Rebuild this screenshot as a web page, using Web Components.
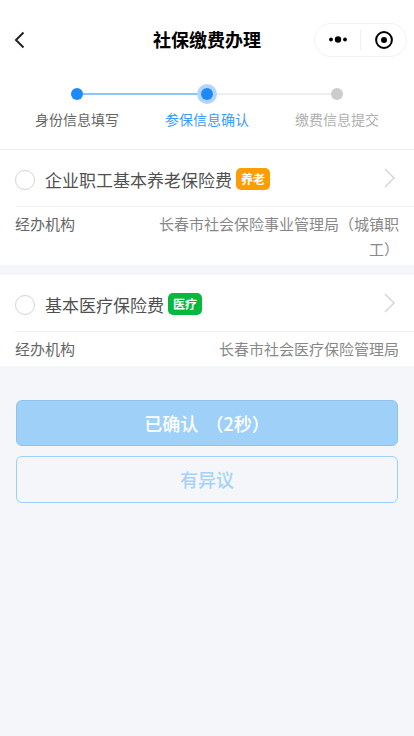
<!DOCTYPE html>
<html lang="zh-CN">
<head>
<meta charset="utf-8">
<title>社保缴费办理</title>
<style>
    html, body {
        margin: 0;
        height: 100%;
        background: #f4f6fa;
        font-family: "Noto Sans CJK SC", "Noto Sans", sans-serif;
    }
</style>
</head>
<body>
<app-page>
    <nav-bar title="社保缴费办理"></nav-bar>
    <step-bar active="1"></step-bar>
    <insurance-card name="企业职工基本养老保险费" tag="养老" tag-color="#ff9d00" value="长春市社会保险事业管理局（城镇职工）"></insurance-card>
    <insurance-card name="基本医疗保险费" tag="医疗" tag-color="#07b83f" value="长春市社会医疗保险管理局"></insurance-card>
    <action-bar>
        <action-button kind="primary">已确认 （2秒）</action-button>
        <action-button kind="plain">有异议</action-button>
    </action-bar>
</app-page>
<script>
class AppPage extends HTMLElement {
    constructor() {
        super();
        this.attachShadow({ mode: "open" });
    }

    connectedCallback() {
        this.shadowRoot.innerHTML = `
        <style>
            :host {
                display: block;
                min-height: 736px;
                background: #f4f6fa;
            }
        </style>
        <slot></slot>
        `;
    }
}

class NavBar extends HTMLElement {
    constructor() {
        super();
        this.attachShadow({ mode: "open" });
    }

    connectedCallback() {
        this.shadowRoot.innerHTML = `
        <style>
            :host {
                display: block;
                background: #fff;
                padding-top: 23px;
                height: 34px;
            }
            .bar {
                display: grid;
                grid-template-columns: 1fr auto 1fr;
                align-items: center;
                height: 34px;
            }
            .back {
                display: block;
                margin-left: 12px;
            }
            h1 {
                margin: 0 0 2px;
                font-size: 18px;
                line-height: 26px;
                font-weight: 700;
                color: #000;
            }
            .capsule {
                justify-self: end;
                margin-right: 7px;
                box-sizing: border-box;
                width: 93px;
                height: 34px;
                border: 1px solid #f2f2f2;
                border-radius: 17px;
                display: flex;
                align-items: center;
            }
            .capsule svg { display: block; }
            .cell {
                flex: 1;
                display: flex;
                justify-content: center;
            }
            .sep {
                width: 1px;
                height: 20px;
                background: #eee;
            }
        </style>
        <div class="bar">
            <svg class="back" width="14" height="20" viewBox="0 0 14 20">
                <path d="M11.5 2.5 L4 10 L11.5 17.5" fill="none" stroke="#222" stroke-width="2"/>
            </svg>
            <h1>${this.getAttribute("title")}</h1>
            <div class="capsule">
                <div class="cell">
                    <svg width="18" height="10" viewBox="0 0 18 10">
                        <circle cx="2" cy="4.5" r="1.9" fill="#000"/>
                        <circle cx="9" cy="4.5" r="3.2" fill="#000"/>
                        <circle cx="16" cy="4.5" r="1.9" fill="#000"/>
                    </svg>
                </div>
                <div class="sep"></div>
                <div class="cell">
                    <svg width="20" height="20" viewBox="0 0 20 20">
                        <circle cx="10" cy="10" r="7.9" fill="none" stroke="#000" stroke-width="2"/>
                        <circle cx="10" cy="10" r="3" fill="#000"/>
                    </svg>
                </div>
            </div>
        </div>
        `;
    }
}

class StepBar extends HTMLElement {
    constructor() {
        super();
        this.attachShadow({ mode: "open" });
        this.steps = ["身份信息填写", "参保信息确认", "缴费信息提交"];
    }

    connectedCallback() {
        this.shadowRoot.innerHTML = `
        <style>
            :host {
                display: block;
                background: #fff;
                padding-top: 27px;
                height: 65px;
                border-bottom: 1px solid #eee;
            }
            .track {
                display: flex;
                align-items: center;
                height: 20px;
                padding: 0 71px;
            }
            .dot {
                width: 12px;
                height: 12px;
                border-radius: 50%;
                background: #1b8bfb;
                flex: none;
            }
            .dot.current {
                box-shadow: 0 0 0 4px #b3d4ff;
                margin: 0 4px;
            }
            .dot.todo { background: #ccc; }
            .line {
                flex: 1;
                height: 2px;
                background: #8cc4ff;
            }
            .line.todo { background: #eee; }
            .labels {
                display: grid;
                grid-template-columns: repeat(3, 130px);
                justify-content: center;
                margin-top: 5px;
                font-size: 14px;
                line-height: 20px;
                text-align: center;
                color: #666;
            }
            .labels .current { color: #3a9bff; }
            .labels .todo { color: #b0b0b0; }
        </style>
        <div class="track">
            <div class="dot"></div>
            <div class="line"></div>
            <div class="dot current"></div>
            <div class="line todo"></div>
            <div class="dot todo"></div>
        </div>
        <div class="labels">
            ${this.steps
            .map((s, i) => {
                const active = Number(this.getAttribute("active"));
                const cls = i === active ? "current" : i > active ? "todo" : "";
                return `<span class="${cls}">${s}</span>`;
            })
            .join("")}
        </div>
        `;
    }
}

class InsuranceCard extends HTMLElement {
    constructor() {
        super();
        this.attachShadow({ mode: "open" });
    }

    connectedCallback() {
        this.shadowRoot.innerHTML = `
        <style>
            :host {
                display: block;
                background: #fff;
            }
            :host(:not(:last-of-type)) { margin-bottom: 10px; }
            .head {
                display: flex;
                align-items: center;
                height: 52px;
                padding-top: 4px;
                margin-left: 15px;
                padding-right: 19px;
                border-bottom: 1px solid #f2f2f2;
            }
            .radio {
                box-sizing: border-box;
                width: 20px;
                height: 20px;
                border: 1px solid #d4d4d4;
                border-radius: 50%;
                margin-right: 10px;
                flex: none;
            }
            .name {
                font-size: 17px;
                line-height: 24px;
                color: #505050;
            }
            .tag {
                margin-left: 4px;
                margin-bottom: 2px;
                width: 34px;
                height: 22px;
                line-height: 22px;
                border-radius: 5px;
                font-size: 12px;
                font-weight: 700;
                text-align: center;
                color: #fff;
                flex: none;
            }
            .arrow {
                margin-left: auto;
                margin-bottom: 5px;
                display: block;
                flex: none;
            }
            .row {
                display: flex;
                justify-content: space-between;
                padding: 5px 15px 4px;
                font-size: 15px;
                line-height: 24.5px;
            }
            .label {
                color: #666;
                flex: none;
            }
            .value {
                color: #888;
                text-align: right;
                max-width: 240px;
            }
        </style>
        <div class="head">
            <div class="radio"></div>
            <span class="name">${this.getAttribute("name")}</span>
            <span class="tag" style="background:${this.getAttribute("tag-color")}">${this.getAttribute("tag")}</span>
            <svg class="arrow" width="11" height="20" viewBox="0 0 11 20">
                <path d="M1 1 L10 10 L1 19" fill="none" stroke="#d2d2d2" stroke-width="1.3"/>
            </svg>
        </div>
        <div class="row">
            <span class="label">经办机构</span>
            <span class="value">${this.getAttribute("value")}</span>
        </div>
        `;
    }
}

class ActionBar extends HTMLElement {
    constructor() {
        super();
        this.attachShadow({ mode: "open" });
    }

    connectedCallback() {
        this.shadowRoot.innerHTML = `
        <style>
            :host {
                display: flex;
                flex-direction: column;
                gap: 10px;
                padding: 34px 16px 0;
            }
        </style>
        <slot></slot>
        `;
    }
}

class ActionButton extends HTMLElement {
    constructor() {
        super();
        this.attachShadow({ mode: "open" });
    }

    connectedCallback() {
        this.shadowRoot.innerHTML = `
        <style>
            :host {
                display: flex;
                align-items: center;
                justify-content: center;
                box-sizing: border-box;
                height: 47px;
                border-radius: 6px;
                font-size: 18px;
                font-weight: 500;
                word-spacing: 3px;
                border: 1px solid #9fd1f8;
                color: #a5d3f8;
            }
            :host([kind="primary"]) {
                height: 46px;
                background: #9fd1f8;
                border-color: #8fc3ea;
                color: #fff;
            }
        </style>
        <slot></slot>
        `;
    }
}

customElements.define("app-page", AppPage);
customElements.define("nav-bar", NavBar);
customElements.define("step-bar", StepBar);
customElements.define("insurance-card", InsuranceCard);
customElements.define("action-bar", ActionBar);
customElements.define("action-button", ActionButton);
</script>
</body>
</html>
